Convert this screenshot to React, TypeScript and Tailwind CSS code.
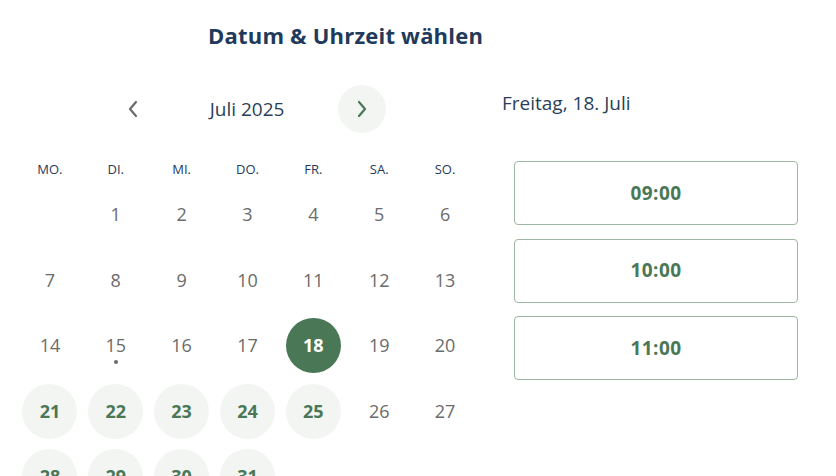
import { useState } from "react";

const weekdays = ["MO.", "DI.", "MI.", "DO.", "FR.", "SA.", "SO."];
const available = [21, 22, 23, 24, 25, 28, 29, 30, 31];
const slots = ["09:00", "10:00", "11:00"];

const Chevron = ({ dir, color }: { dir: "left" | "right"; color: string }) => (
  <svg width="12" height="18" viewBox="0 0 12 18" fill="none">
    <path
      d={dir === "left" ? "M9 2 L3 9 L9 16" : "M3 2 L9 9 L3 16"}
      stroke={color}
      strokeWidth="2.2"
      strokeLinecap="round"
      strokeLinejoin="round"
    />
  </svg>
);

const App = () => {
  const [selected, setSelected] = useState(18);

  // July 2025 starts on a Tuesday
  const cells: (number | null)[] = [null];
  for (let d = 1; d <= 31; d++) cells.push(d);

  return (
    <div className="w-[836px] h-[476px] overflow-hidden bg-white font-['Open_Sans','Lato',sans-serif]">
      <div className="pt-[21px] pl-[208px]">
        <h1 className="text-[22px] leading-[28px] font-bold tracking-[0.2px] text-[#1f3a5a]">Datum &amp; Uhrzeit wählen</h1>
      </div>

      <div className="flex pl-[17px]">
        {/* calendar */}
        <div className="w-[461px]">
          <div className="mt-[36px] flex items-center h-[48px]">
            <button className="ml-[92px] w-[48px] h-[48px] rounded-full flex items-center justify-center">
              <Chevron dir="left" color="#6b6b6b" />
            </button>
            <div className="w-[180px] text-center text-[19px] text-[#2a3f57]">Juli 2025</div>
            <button className="ml-[1px] w-[48px] h-[48px] rounded-full bg-[#f3f5f3] flex items-center justify-center">
              <Chevron dir="right" color="#4a7856" />
            </button>
          </div>

          <div className="mt-[28px] grid grid-cols-7 h-[16px]">
            {weekdays.map((w) => (
              <div key={w} className="text-center text-[13px] leading-[16px] text-[#1f3a5a]">
                {w}
              </div>
            ))}
          </div>

          <div className="mt-[5px] grid grid-cols-7 auto-rows-[65.5px]">
            {cells.map((d, i) => {
              if (d === null) return <div key={i} />;
              const isSel = d === selected;
              const isAvail = available.includes(d);
              return (
                <div key={i} className="flex items-center justify-center">
                  <button
                    onClick={() => isAvail && setSelected(d)}
                    className={
                      "relative w-[55px] h-[55px] rounded-full flex items-center justify-center text-[18px] " +
                      (isSel
                        ? "bg-[#4a7856] text-white font-bold"
                        : isAvail
                        ? "bg-[#f3f5f3] text-[#4a7856] font-bold"
                        : "text-[#6b6b6b]")
                    }
                  >
                    {d}
                    {d === 15 && (
                      <span className="absolute left-1/2 -translate-x-1/2 top-[42px] w-[4px] h-[4px] rounded-full bg-[#6b6b6b]" />
                    )}
                  </button>
                </div>
              );
            })}
          </div>
        </div>

        {/* time slots */}
        <div className="ml-[24px] w-[300px]">
          <p className="mt-[42px] text-[19px] leading-[24px] text-[#2a3f57]">Freitag, 18. Juli</p>
          <div className="mt-[46px] ml-[12px] flex flex-col gap-[13.5px]">
            {slots.map((s) => (
              <button
                key={s}
                className="w-[284px] h-[64px] rounded-[4px] border border-[#9db8a3] text-[19px] font-bold tracking-[0.4px] text-[#4a7856]"
              >
                {s}
              </button>
            ))}
          </div>
        </div>
      </div>
    </div>
  );
};

export default App;
